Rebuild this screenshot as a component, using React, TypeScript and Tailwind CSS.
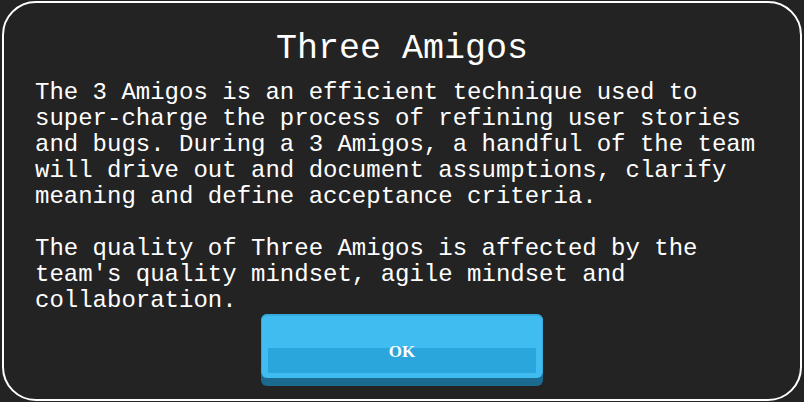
const paragraphs = [
  "The 3 Amigos is an efficient technique used to super-charge the process of refining user stories and bugs. During a 3 Amigos, a handful of the team will drive out and document assumptions, clarify meaning and define acceptance criteria.",
  "The quality of Three Amigos is affected by the team's quality mindset, agile mindset and collaboration.",
];

export default function App() {
  return (
    <div className="w-[804px] h-[402px] bg-[#232323] pt-[1px] pl-[2px] font-['Courier_New','Nimbus_Mono_PS','Nimbus_Mono_L','FreeMono','Liberation_Mono',monospace] text-white">
      <div className="w-[800px] h-[400px] border-2 border-white rounded-[34px] flex flex-col">
        {/* TITLE */}
        <h1 className="mt-[26px] text-[35px] leading-[40px] text-center">Three Amigos</h1>

        {/* BODY */}
        <div className="mt-[11px] ml-[31px] w-[736px] text-[24px] leading-[26px] flex flex-col gap-[26px]">
          {paragraphs.map((p) => (
            <p key={p.slice(0, 12)}>{p}</p>
          ))}
        </div>

        {/* BUTTON */}
        <button className="mx-auto w-[282px] h-[72px] rounded-[6px] bg-[#1b6a8f] pb-[8px] cursor-pointer">
          <div className="h-[64px] rounded-[6px] bg-[#40bcf0] border-t-2 border-x border-[#36a9dc] grid">
            <div className="[grid-area:1/1] mt-[32px] mx-[6px] h-[25px] bg-[#2aa6dd]" />
            <span className="[grid-area:1/1] mt-[26px] font-['Liberation_Serif',serif] text-[17px] leading-[20px] font-bold text-white text-center">
              OK
            </span>
          </div>
        </button>
      </div>
    </div>
  );
}
